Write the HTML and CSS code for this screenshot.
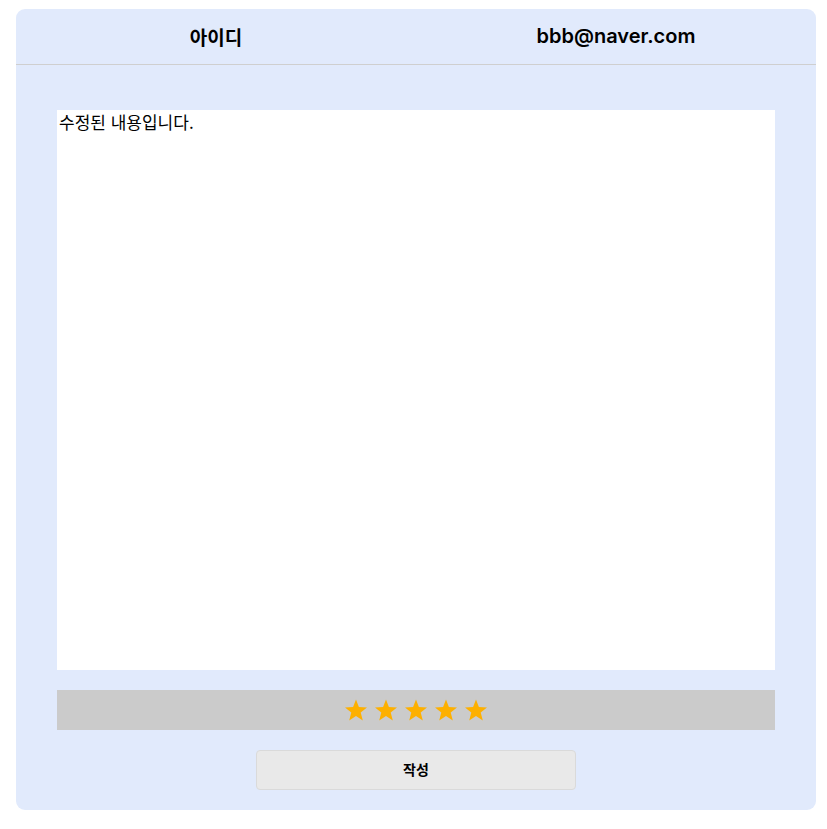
FILE: index.html
```html
<!DOCTYPE html>
<html lang="ko">
<head>
<meta charset="utf-8">
<link rel="stylesheet" href="styles.css">
</head>
<body>
<div class="card">
  <div class="header">
    <div class="cell cell-ko">아이디</div>
    <div class="cell">bbb@naver.com</div>
  </div>
  <div class="body">
    <textarea class="content">수정된 내용입니다.</textarea>
    <div class="stars">
      <svg class="star" viewBox="0 0 24 24"><path d="M12 1.5l2.9 7.6 8.1.4-6.3 5.1 2.1 7.9L12 18l-6.8 4.5 2.1-7.9L1 9.5l8.1-.4z"/></svg>
      <svg class="star" viewBox="0 0 24 24"><path d="M12 1.5l2.9 7.6 8.1.4-6.3 5.1 2.1 7.9L12 18l-6.8 4.5 2.1-7.9L1 9.5l8.1-.4z"/></svg>
      <svg class="star" viewBox="0 0 24 24"><path d="M12 1.5l2.9 7.6 8.1.4-6.3 5.1 2.1 7.9L12 18l-6.8 4.5 2.1-7.9L1 9.5l8.1-.4z"/></svg>
      <svg class="star" viewBox="0 0 24 24"><path d="M12 1.5l2.9 7.6 8.1.4-6.3 5.1 2.1 7.9L12 18l-6.8 4.5 2.1-7.9L1 9.5l8.1-.4z"/></svg>
      <svg class="star" viewBox="0 0 24 24"><path d="M12 1.5l2.9 7.6 8.1.4-6.3 5.1 2.1 7.9L12 18l-6.8 4.5 2.1-7.9L1 9.5l8.1-.4z"/></svg>
    </div>
    <button class="submit">작성</button>
  </div>
</div>
</body>
</html>
```
FILE: styles.css
```css
html, body {
  margin: 0;
  padding: 0;
  background: #ffffff;
}
.card {
  box-sizing: border-box;
  width: 800px;
  margin: 9px 0 0 16px;
  background: #e1eafc;
  border-radius: 9px;
  padding-bottom: 20px;
}
.header {
  display: grid;
  grid-template-columns: 1fr 1fr;
  height: 56px;
  border-bottom: 1px solid #cfcfcf;
  box-sizing: border-box;
}
.cell {
  display: flex;
  align-items: center;
  justify-content: center;
  font-family: "Inter", "Noto Sans CJK KR", sans-serif;
  font-weight: 600;
  font-size: 20px;
  color: #000;
  padding-bottom: 1px;
}
.cell-ko {
  font-size: 19px;
}
.body {
  display: flex;
  flex-direction: column;
  align-items: center;
  padding: 45px 41px 0;
  gap: 20px;
}
.content {
  box-sizing: border-box;
  width: 718px;
  height: 560px;
  border: none;
  outline: none;
  resize: none;
  background: #ffffff;
  padding: 2px 2px;
  margin: 0;
  font-family: "Noto Sans CJK KR", sans-serif;
  font-size: 17px;
  line-height: 20px;
  color: #000;
  display: block;
}
.stars {
  width: 718px;
  height: 40px;
  background: #cbcbcb;
  display: flex;
  align-items: center;
  justify-content: center;
  gap: 6px;
  box-sizing: border-box;
}
.star {
  width: 24px;
  height: 24px;
  fill: #fdb000;
}
.submit {
  box-sizing: border-box;
  width: 320px;
  height: 40px;
  margin: 0;
  padding: 0 0 3px;
  background: #e9e9e9;
  border: 1px solid #dadada;
  border-radius: 4px;
  font-family: "Noto Sans CJK KR", sans-serif;
  font-weight: 700;
  font-size: 14px;
  color: #000;
}
```
